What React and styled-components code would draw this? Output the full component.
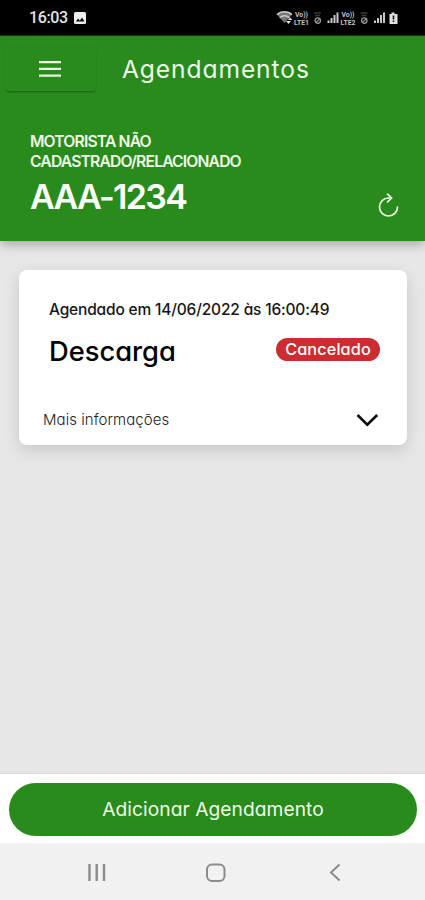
import React from "react";
import styled, { createGlobalStyle } from "styled-components";

const GlobalStyle = createGlobalStyle`
  * {
    box-sizing: border-box;
  }

  body {
    margin: 0;
    font-family: Inter, "Open Sans", sans-serif;
    font-feature-settings: "cv11" 1;
  }
`;

const Screen = styled.div`
  width: 425px;
  height: 900px;
  display: flex;
  flex-direction: column;
  background-color: #e7e7e7;
  overflow: hidden;
`;

// One line of text, sized and tracked per use
const Text = styled.span`
  display: block;
  color: ${(props) => props.$color || "#fff"};
  font-size: ${(props) => props.$size}px;
  font-weight: ${(props) => props.$weight || 400};
  line-height: ${(props) => props.$line || 20}px;
  letter-spacing: ${(props) => props.$track || 0}px;
  white-space: nowrap;
`;

const StatusBar = styled.div`
  height: 36px;
  flex: none;
  display: flex;
  align-items: center;
  padding: 0 24px 0 29px;
  background-color: #000;
  border-bottom: 1px solid #0d3d08;
`;

const Clock = styled.span`
  color: #e4e4e4;
  font-family: Roboto, sans-serif;
  font-size: 16px;
  font-weight: 500;
  letter-spacing: -0.4px;
  line-height: 36px;
  width: 45px;
  padding-top: 1px;
`;

const StatusIcons = styled.svg`
  margin-left: auto;
`;

const Header = styled.header`
  height: 205px;
  flex: none;
  background-color: #298b1b;
  box-shadow: 0 2px 12px rgba(0, 0, 0, 0.35);
`;

const Toolbar = styled.div`
  height: 66px;
  display: flex;
  align-items: center;
  padding-left: 5px;
`;

const MenuButton = styled.button`
  width: 91px;
  height: 44px;
  padding: 0 2px 0 0;
  display: flex;
  align-items: center;
  justify-content: center;
  border: 0;
  border-radius: 4px;
  background-color: #298b1b;
  box-shadow: 0 2px 2px -1px rgba(0, 0, 0, 0.3), 0 0 2px rgba(0, 0, 0, 0.1);
`;

const Title = styled.h1`
  margin: 0 0 0 26px;
`;

const Driver = styled.div`
  display: flex;
  justify-content: space-between;
  align-items: flex-end;
  padding: 30px 25px 0 30px;
`;

const RefreshIcon = styled.svg`
  margin-bottom: 2px;
`;

const Content = styled.main`
  flex: 1;
  padding: 29px 18px 0 19px;
`;

const Card = styled.section`
  height: 175px;
  padding: 29px 27px 0 30px;
  border-radius: 8px;
  background-color: #fff;
  box-shadow: 0 5px 16px rgba(0, 0, 0, 0.14);
`;

const CardRow = styled.div`
  display: flex;
  justify-content: space-between;
  align-items: center;
  margin-top: ${(props) => props.$top}px;
  margin-left: ${(props) => props.$left || 0}px;
`;

const Badge = styled.span`
  width: 104px;
  height: 23px;
  margin-bottom: 5px;
  display: flex;
  justify-content: center;
  border-radius: 12px;
  background-color: #cb2d30;
`;

const Footer = styled.footer`
  height: 70px;
  flex: none;
  padding: 9px 8px 0 9px;
  background-color: #fff;
  border-top: 1px solid #dadada;
`;

const AddButton = styled.button`
  width: 100%;
  height: 53px;
  padding: 0 0 1px;
  display: flex;
  align-items: center;
  justify-content: center;
  border: 0;
  border-radius: 27px;
  background-color: #298b1b;
  font-family: inherit;
  font-feature-settings: inherit;
`;

const NavBar = styled.nav`
  height: 57px;
  flex: none;
  background-color: #f1f1f1;
`;

const Signal = ({ x }) => (
  <g transform={`translate(${x} 0)`} fill="#c9c9c9">
    <rect x="0" y="20.5" width="2" height="2.5" />
    <rect x="3" y="18" width="2" height="5" />
    <rect x="6" y="15" width="2" height="8" />
    <rect x="9" y="12.5" width="2" height="10.5" />
  </g>
);

const Volte = ({ x, label }) => (
  <g
    fill="#c4c4c4"
    fontFamily="Roboto, sans-serif"
    fontWeight="700"
    fontSize="6.5"
  >
    <text x={x + 1} y="16.5" textLength="13" lengthAdjust="spacingAndGlyphs">
      Vo))
    </text>
    <text x={x} y="24.5" textLength="15" lengthAdjust="spacingAndGlyphs">
      {label}
    </text>
  </g>
);

const NoData = ({ x }) => (
  <g transform={`translate(${x} 0)`}>
    <path d="M0 13h7M1 15.5h5" stroke="#3a3a3a" strokeWidth="1.3" />
    <circle cx="3.8" cy="20.6" r="2.7" stroke="#999" strokeWidth="1.3" fill="none" />
    <path d="M1.8 22.6l4-4" stroke="#999" strokeWidth="1.2" />
  </g>
);

const App = () => {
  return (
    <Screen>
      <GlobalStyle />

      <StatusBar>
        <Clock>16:03</Clock>
        <svg width="12" height="12" viewBox="0 0 12 12">
          <rect width="12" height="12" rx="1.5" fill="#eee" />
          <path d="M1.8 9.5l2.3-3 1.7 1.9 2.3-3 2.4 4.1z" fill="#111" />
        </svg>
        <StatusIcons width="125" height="36" viewBox="276 0 125 36">
          <path d="M277 14.5c4-4 11-4 15 0l-7.5 8.5z" fill="#777" />
          <path
            d="M277 14.8c4-4 11-4 15 0M279.7 17.8c2.8-2.6 7-2.6 9.7 0"
            stroke="#c9c9c9"
            strokeWidth="1.5"
            fill="none"
          />
          <path d="M286 21l2.5 3 2.5-3zM288 20l2-2.5 2.5 2.5z" fill="#ddd" />
          <Volte x={294} label="LTE1" />
          <NoData x={314} />
          <Signal x={327.5} />
          <Volte x={340.5} label="LTE2" />
          <NoData x={360.5} />
          <Signal x={374} />
          <path d="M391.5 12.5h3v1.5h3v10h-8V14h2z" fill="#e2e2e2" />
          <path d="M393.5 15.5v4M393.5 20.5v1.5" stroke="#111" strokeWidth="1.6" />
        </StatusIcons>
      </StatusBar>

      <Header>
        <Toolbar>
          <MenuButton aria-label="Menu">
            <svg width="22" height="16" viewBox="0 0 22 16">
              <path d="M0 1.2h22M0 7.9h22M0 14.6h22" stroke="#eaf5e5" strokeWidth="2.2" />
            </svg>
          </MenuButton>
          <Title>
            <Text $size={24.6} $line={32} $track={0.9} $color="#eef8ea">
              Agendamentos
            </Text>
          </Title>
        </Toolbar>
        <Driver>
          <div>
            <Text $size={15.7} $weight={600} $track={-0.85} $color="#eef8ea">
              MOTORISTA NÃO
            </Text>
            <Text $size={15.7} $weight={600} $track={-0.85} $color="#eef8ea">
              CADASTRADO/RELACIONADO
            </Text>
            <Text $size={34} $weight={600} $line={49} $track={-1.7}>
              AAA-1234
            </Text>
          </div>
          <RefreshIcon
            width="22"
            height="26"
            viewBox="0 0 22 26"
            fill="none"
            stroke="#eef8ea"
            strokeWidth="1.7"
            strokeLinecap="round"
            strokeLinejoin="round"
          >
            <path d="M19.5 14a9 9 0 1 1-9-9h3" />
            <path d="M9.6 1.200l4 3.800-4 3.800" />
          </RefreshIcon>
        </Driver>
      </Header>

      <Content>
        <Card>
          <Text $size={15.5} $weight={500} $line={22} $track={-0.18} $color="#161616">
            Agendado em 14/06/2022 às 16:00:49
          </Text>
          <CardRow $top={14}>
            <Text $size={27.3} $weight={500} $line={34} $color="#000">
              Descarga
            </Text>
            <Badge>
              <Text $size={16.3} $weight={500} $line={22} $track={0.1}>
                Cancelado
              </Text>
            </Badge>
          </CardRow>
          <CardRow $top={41} $left={-6}>
            <Text $size={15} $weight={300} $track={0.05} $color="#222">
              Mais informações
            </Text>
            <svg width="25" height="20" viewBox="0 0 25 20">
              <path
                d="M2.500 5l9.800 9.600L22.200 5"
                stroke="#0a0a0a"
                strokeWidth="2.6"
                fill="none"
              />
            </svg>
          </CardRow>
        </Card>
      </Content>

      <Footer>
        <AddButton>
          <Text $size={19.2} $track={0.05} $color="#eef8ea">
            Adicionar Agendamento
          </Text>
        </AddButton>
      </Footer>

      <NavBar>
        <svg width="425" height="57" fill="none" stroke="#8b8b8b" strokeWidth="2">
          <path d="M89.500 21v17M96.700 21v17M104 21v17" strokeWidth="2.4" />
          <rect x="207" y="21.500" width="17.500" height="16.500" rx="5" />
          <path d="M339.500 21.500l-8.500 8 8.500 8" />
        </svg>
      </NavBar>
    </Screen>
  );
};

export default App;
